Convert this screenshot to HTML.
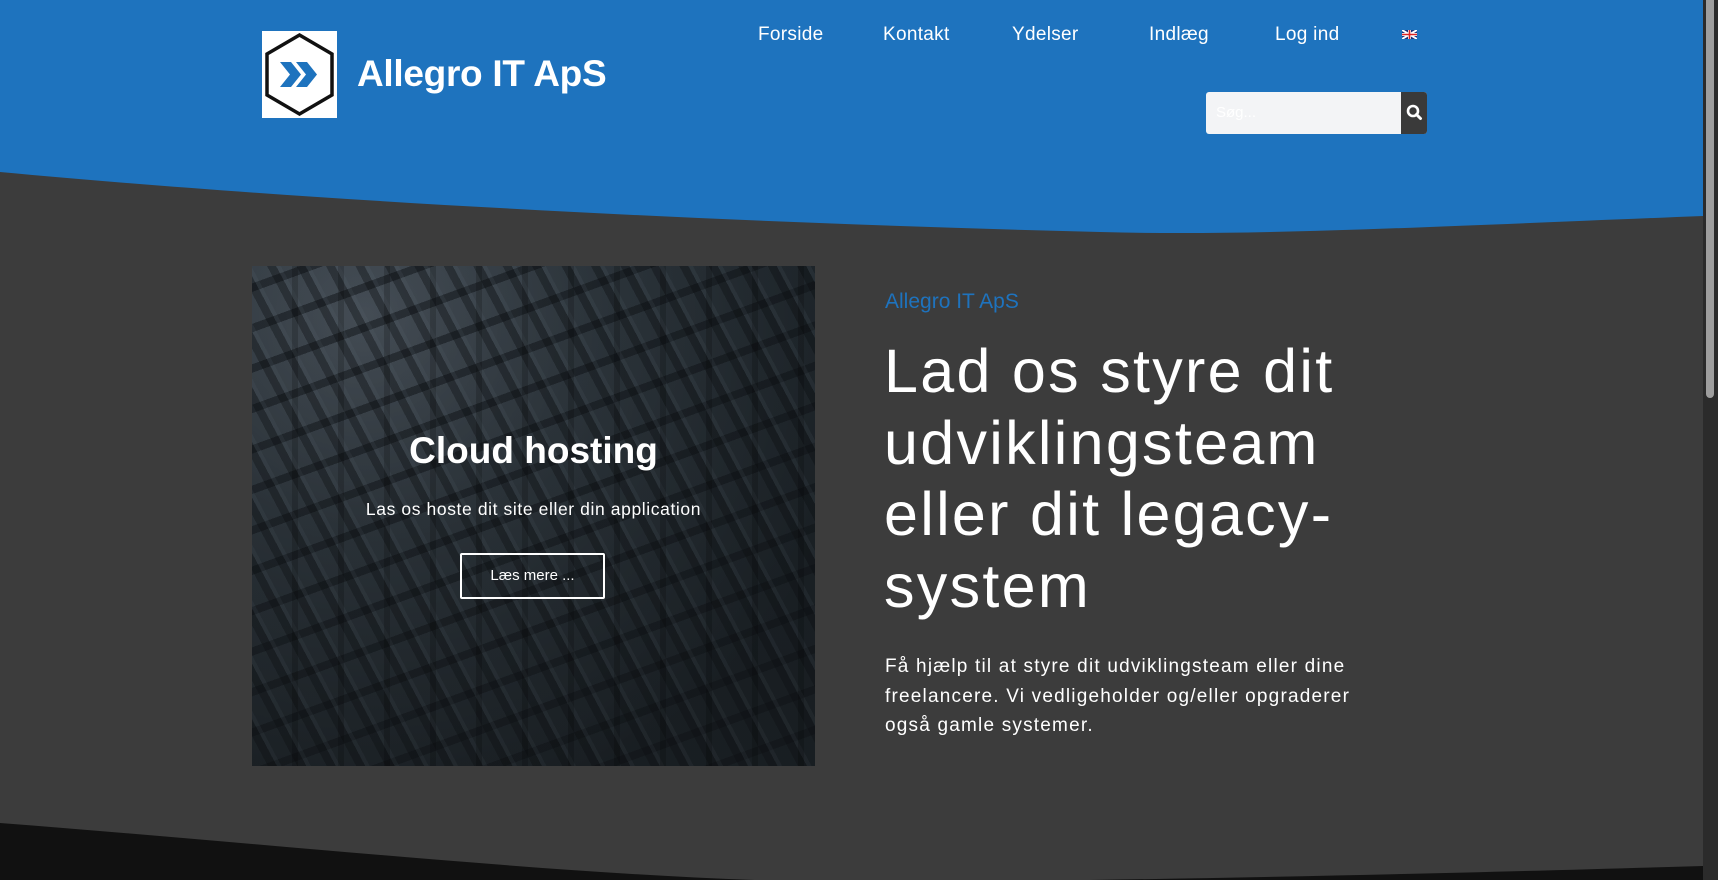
<!DOCTYPE html>
<html><head><meta charset="utf-8"><style>
*{margin:0;padding:0;box-sizing:border-box}
html,body{width:1718px;height:880px;overflow:hidden;background:#3c3c3c;font-family:"Liberation Sans",sans-serif}
.abs{position:absolute}
.nav a{position:absolute;top:24px;color:#fff;font-size:19px;text-decoration:none;white-space:nowrap;letter-spacing:0.3px}
.card{left:252px;top:266px;width:563px;height:500px;overflow:hidden;
background:
linear-gradient(rgba(20,26,32,.40),rgba(20,24,28,.55)),
repeating-linear-gradient(62deg,rgba(0,0,0,.0) 0 14px,rgba(0,0,0,.35) 14px 22px,rgba(150,170,185,.12) 22px 26px),
repeating-linear-gradient(-20deg,rgba(0,0,0,0) 0 30px,rgba(10,12,15,.5) 30px 38px),
radial-gradient(ellipse at 20% 10%,#66707a 0,#3d474e 35%,#1e2529 80%);}
</style></head><body>
<svg class="abs" style="left:0;top:0" width="1703" height="880">
<path d="M0,0 H1703 V216 C1400,228 1250,236 1100,232 C700,222 300,200 0,172 Z" fill="#1e73be"/>
<path d="M0,823 C350,850 650,885 900,882 C1200,880 1500,872 1703,866 V880 H0 Z" fill="#111111"/>
</svg>
<div class="abs" style="left:1703px;top:0;width:15px;height:880px;background:#2b2b2b"></div>
<div class="abs" style="left:1706px;top:0;width:8px;height:398px;background:#9e9e9e;border-radius:0 0 4px 4px"></div>

<div class="abs" style="left:262px;top:31px;width:75px;height:87px;background:#fff">
<svg width="75" height="87" viewBox="0 0 75 87">
<polygon points="37.5,4 70,23 70,64 37.5,83 5,64 5,23" fill="none" stroke="#111" stroke-width="3.5"/>
<polygon points="18,31 29,31 39,43.5 29,56 18,56 28,43.5" fill="#1e73be"/>
<polygon points="34,31 45,31 55,43.5 45,56 34,56 44,43.5" fill="#1e73be"/>
</svg></div>
<div class="abs" style="left:357px;top:53px;color:#fff;font-weight:bold;font-size:37px;letter-spacing:-0.3px;white-space:nowrap">Allegro IT ApS</div>

<div class="nav">
<a style="left:758px">Forside</a>
<a style="left:883px">Kontakt</a>
<a style="left:1012px">Ydelser</a>
<a style="left:1149px">Indlæg</a>
<a style="left:1275px">Log ind</a>
</div>
<svg class="abs" style="left:1402px;top:30px" width="15" height="9" viewBox="0 0 15 9">
<rect width="15" height="9" fill="#1a2f7a"/><path d="M0,0L15,9M15,0L0,9" stroke="#fff" stroke-width="2"/><path d="M7.5,0V9M0,4.5H15" stroke="#fff" stroke-width="3"/><path d="M7.5,0V9M0,4.5H15" stroke="#d22" stroke-width="1.6"/></svg>

<div class="abs" style="left:1206px;top:92px;width:221px;height:42px;background:#f3f4f6;border-radius:3px;overflow:hidden">
<span class="abs" style="left:10px;top:12px;color:#fff;font-size:15px">Søg...</span>
<div class="abs" style="left:195px;top:0;width:26px;height:42px;background:#3a3a3a">
<svg width="26" height="42"><circle cx="12" cy="19" r="5" fill="none" stroke="#fff" stroke-width="2.6"/><path d="M15.5,22.5L19.5,26.5" stroke="#fff" stroke-width="3" stroke-linecap="round"/></svg></div></div>

<div class="abs card">
<div class="abs" style="left:0;top:0;width:563px;height:500px;background:repeating-linear-gradient(90deg,rgba(0,0,0,0) 0 40px,rgba(0,0,0,.18) 40px 46px)"></div>
<div class="abs" style="left:0;width:563px;top:164px;text-align:center;color:#fff;font-weight:bold;font-size:37px">Cloud hosting</div>
<div class="abs" style="left:0;width:563px;top:233px;text-align:center;color:#fff;font-size:17.5px;letter-spacing:0.6px">Las os hoste dit site eller din application</div>
<div class="abs" style="left:208px;top:287px;width:145px;height:46px;border:2px solid #fff;border-radius:2px;color:#fff;font-size:15px;text-align:center;line-height:42px">Læs mere ...</div>
</div>

<div class="abs" style="left:885px;top:290px;color:#1e73be;font-size:21px">Allegro IT ApS</div>
<div class="abs" style="left:884px;top:336px;width:600px;color:#fff;font-size:61px;line-height:71.5px;letter-spacing:2.3px;white-space:nowrap">Lad os styre dit<br>udviklingsteam<br>eller dit legacy-<br>system</div>
<div class="abs" style="left:885px;top:652px;width:560px;color:#fff;font-size:19px;line-height:29.6px;letter-spacing:1.2px;white-space:nowrap">Få hjælp til at styre dit udviklingsteam eller dine<br>freelancere. Vi vedligeholder og/eller opgraderer<br>også gamle systemer.</div>
</body></html>
